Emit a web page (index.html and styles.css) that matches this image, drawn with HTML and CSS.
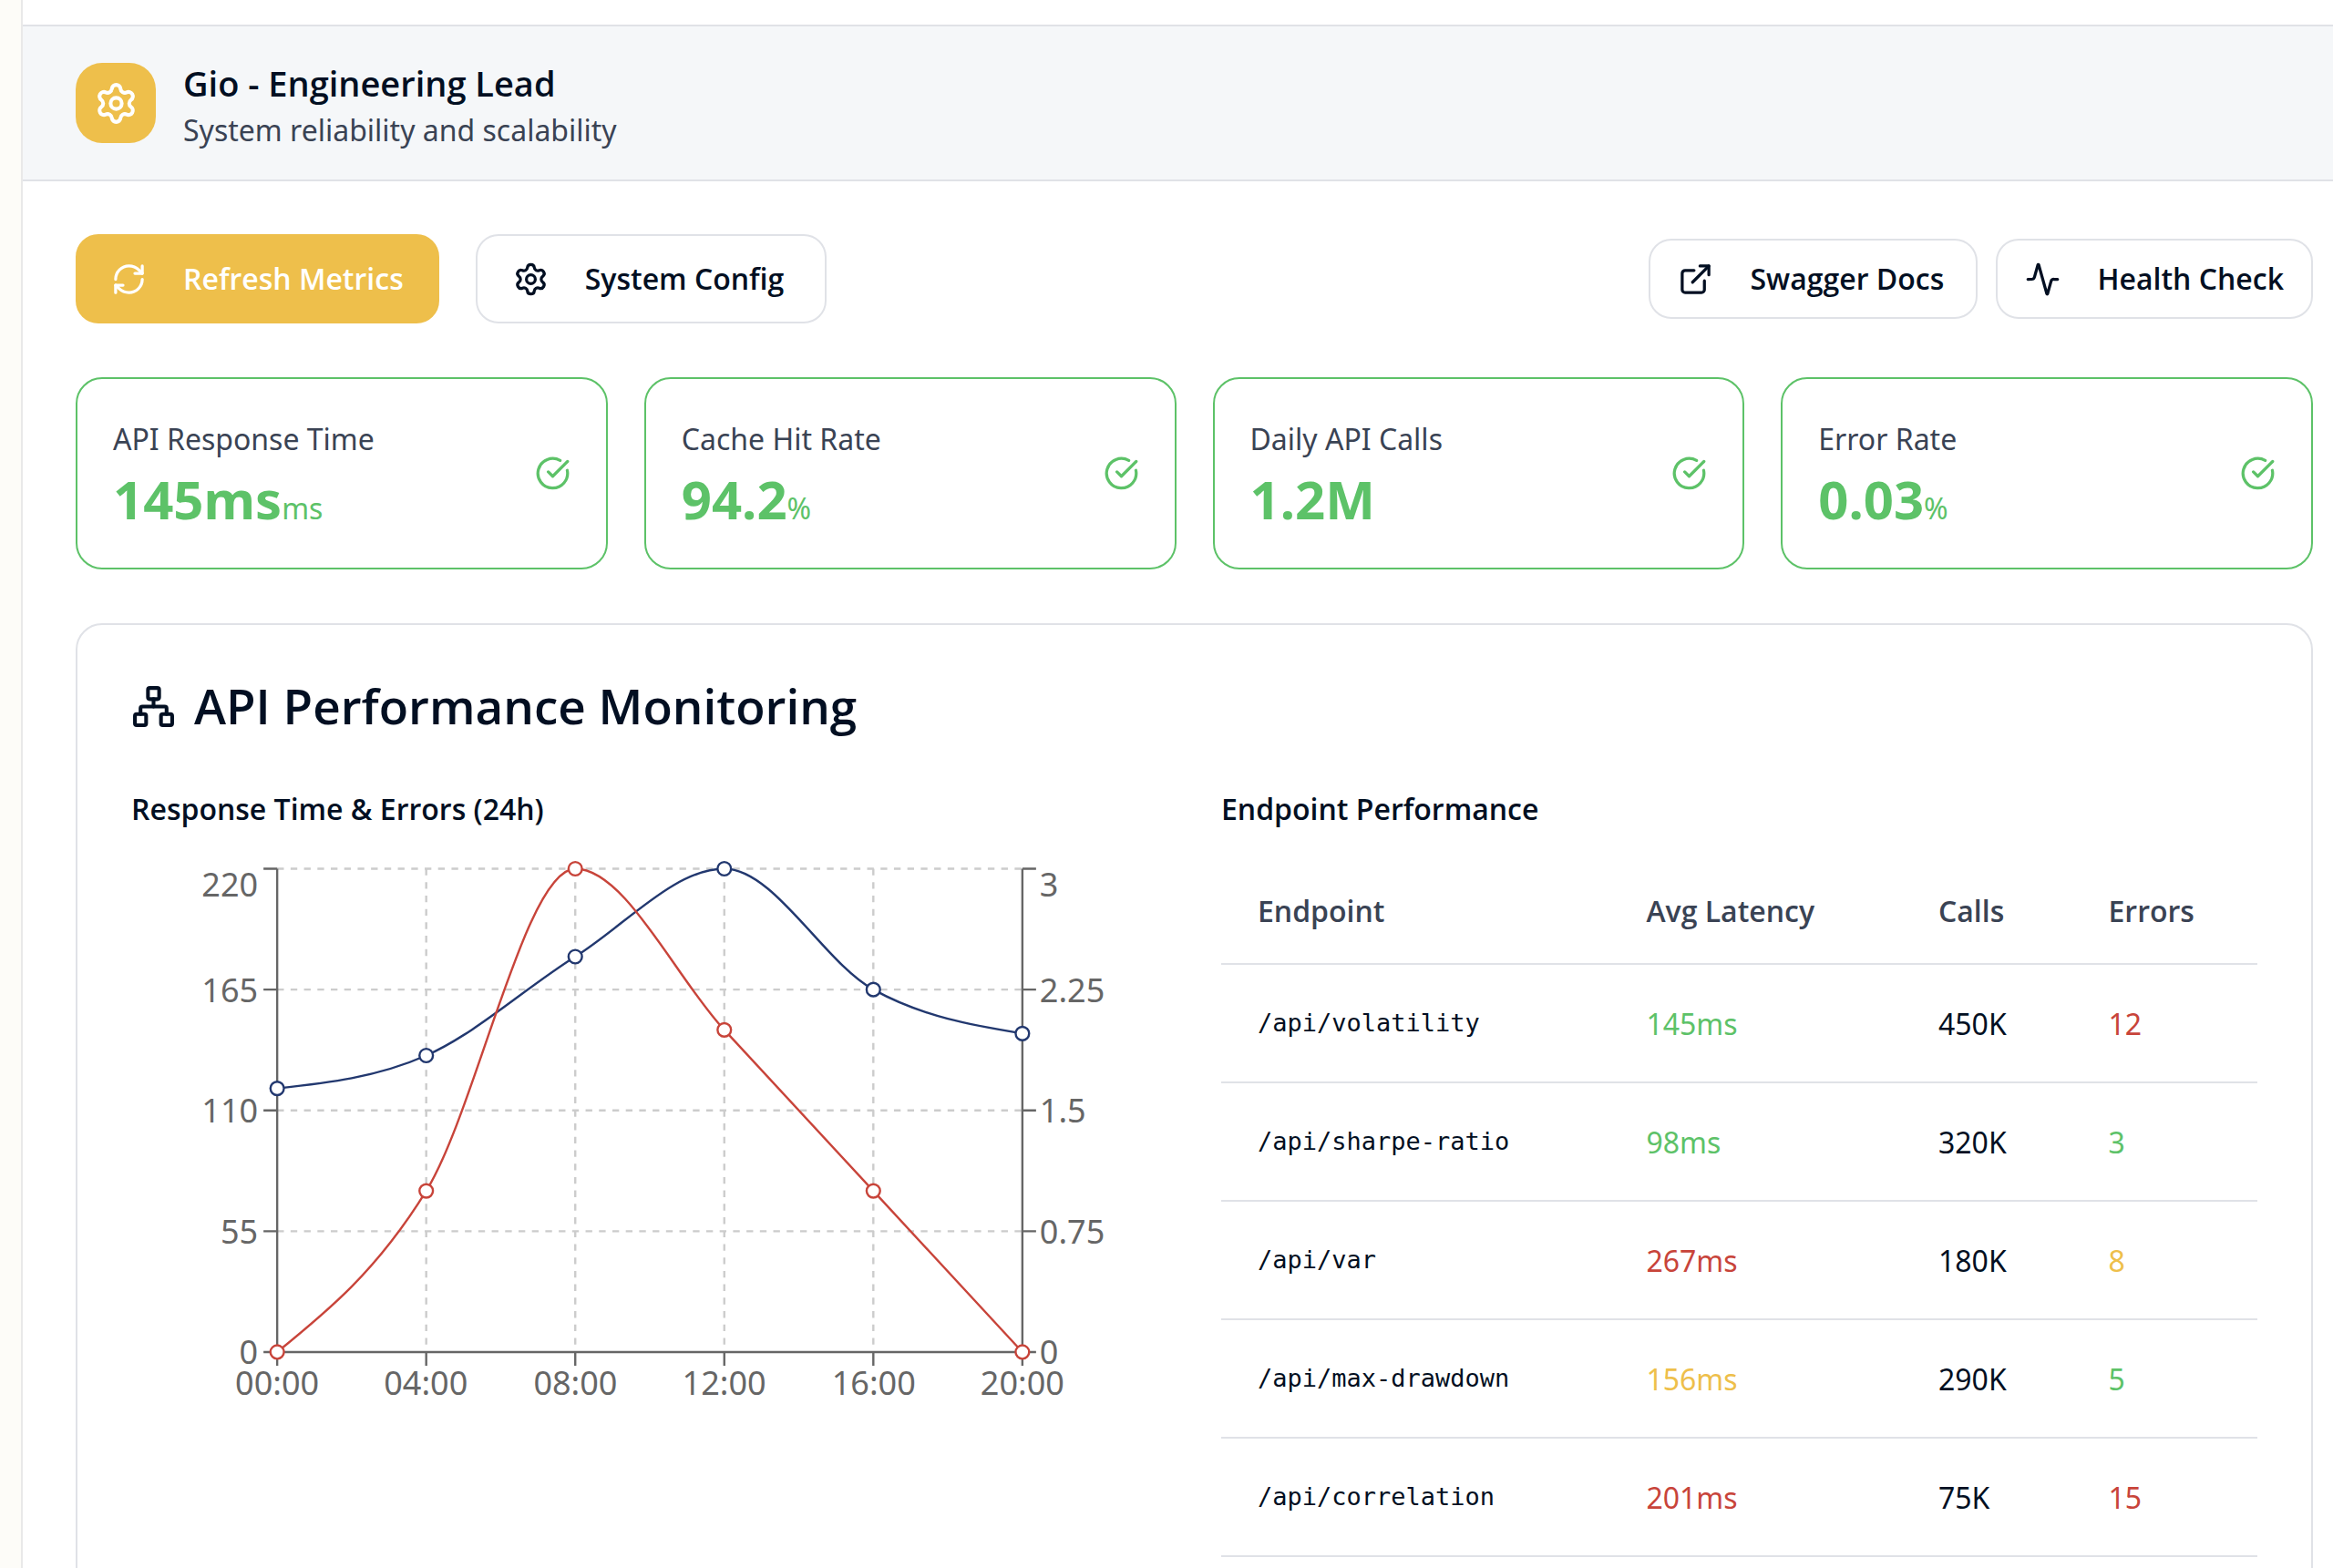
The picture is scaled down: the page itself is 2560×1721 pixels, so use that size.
FILE: index.html
```html
<!DOCTYPE html>
<html lang="en">
<head>
<meta charset="utf-8">
<title>Gio - Engineering Lead</title>
<link rel="stylesheet" href="styles.css">
</head>
<body>
<svg class="sprite" aria-hidden="true">
  <symbol id="settings" viewBox="0 0 24 24"><path d="M9.671 4.136a2.34 2.34 0 0 1 4.659 0 2.34 2.34 0 0 0 3.319 1.915 2.34 2.34 0 0 1 2.33 4.033 2.34 2.34 0 0 0 0 3.831 2.34 2.34 0 0 1-2.33 4.033 2.34 2.34 0 0 0-3.319 1.915 2.34 2.34 0 0 1-4.659 0 2.34 2.34 0 0 0-3.32-1.915 2.34 2.34 0 0 1-2.33-4.033 2.34 2.34 0 0 0 0-3.831A2.34 2.34 0 0 1 6.35 6.051a2.34 2.34 0 0 0 3.319-1.915"/><circle cx="12" cy="12" r="3"/></symbol>
  <symbol id="refresh" viewBox="0 0 24 24"><path d="M3 12a9 9 0 0 1 9-9 9.75 9.75 0 0 1 6.74 2.74L21 8"/><path d="M21 3v5h-5"/><path d="M21 12a9 9 0 0 1-9 9 9.75 9.75 0 0 1-6.74-2.74L3 16"/><path d="M8 16H3v5"/></symbol>
  <symbol id="external" viewBox="0 0 24 24"><path d="M15 3h6v6"/><path d="M10 14 21 3"/><path d="M18 13v6a2 2 0 0 1-2 2H5a2 2 0 0 1-2-2V8a2 2 0 0 1 2-2h6"/></symbol>
  <symbol id="activity" viewBox="0 0 24 24"><path d="M22 12h-2.48a2 2 0 0 0-1.93 1.46l-2.35 8.36a.25.25 0 0 1-.48 0L9.24 2.18a.25.25 0 0 0-.48 0l-2.35 8.36A2 2 0 0 1 4.49 12H2"/></symbol>
  <symbol id="check" viewBox="0 0 24 24"><path d="M21.801 10A10 10 0 1 1 17 3.335"/><path d="m9 11 3 3L22 4"/></symbol>
  <symbol id="network" viewBox="0 0 24 24"><rect x="16" y="16" width="6" height="6" rx="1"/><rect x="2" y="16" width="6" height="6" rx="1"/><rect x="9" y="2" width="6" height="6" rx="1"/><path d="M5 16v-3a1 1 0 0 1 1-1h12a1 1 0 0 1 1 1v3"/><path d="M12 12V8"/></symbol>
</svg>
<div class="shell">
  <aside class="rail"></aside>
  <div class="page">
    <header class="persona">
      <span class="persona-badge"><svg class="icon icon-lg"><use href="#settings"/></svg></span>
      <div class="persona-text">
        <h1 class="persona-name">Gio - Engineering Lead</h1>
        <p class="persona-role">System reliability and scalability</p>
      </div>
    </header>
    <main class="content">
      <div class="toolbar">
        <div class="group">
          <button class="btn btn-primary" type="button"><svg class="icon"><use href="#refresh"/></svg>Refresh Metrics</button>
          <button class="btn btn-config" type="button"><svg class="icon"><use href="#settings"/></svg>System Config</button>
        </div>
        <div class="group group-tight">
          <button class="btn btn-sm btn-docs" type="button"><svg class="icon"><use href="#external"/></svg>Swagger Docs</button>
          <button class="btn btn-sm" type="button"><svg class="icon"><use href="#activity"/></svg>Health Check</button>
        </div>
      </div>
      <section class="stats">
        <article class="stat"><div class="stat-text"><p class="stat-label">API Response Time</p><p class="stat-value">145ms<span class="unit">ms</span></p></div><svg class="icon"><use href="#check"/></svg></article>
        <article class="stat"><div class="stat-text"><p class="stat-label">Cache Hit Rate</p><p class="stat-value">94.2<span class="unit">%</span></p></div><svg class="icon"><use href="#check"/></svg></article>
        <article class="stat"><div class="stat-text"><p class="stat-label">Daily API Calls</p><p class="stat-value">1.2M</p></div><svg class="icon"><use href="#check"/></svg></article>
        <article class="stat"><div class="stat-text"><p class="stat-label">Error Rate</p><p class="stat-value">0.03<span class="unit">%</span></p></div><svg class="icon"><use href="#check"/></svg></article>
      </section>
      <section class="panel">
        <h2 class="panel-title"><svg class="icon icon-lg"><use href="#network"/></svg>API Performance Monitoring</h2>
        <div class="columns">
          <div>
            <h3 class="subtitle">Response Time &amp; Errors (24h)</h3>
            <svg class="chart" viewBox="-1 -0.5 1136 628" role="img" aria-label="Response time and errors over 24 hours">
              <path class="grid" d="M159 12H976M159 144.5H976M159 277H976M159 409.5H976M322.4 12V542M485.8 12V542M649.2 12V542M812.6 12V542"/>
              <path class="axis" d="M159 12V542H976V12M144 12H159M144 144.5H159M144 277H159M144 409.5H159M144 542H159M976 12H991M976 144.5H991M976 277H991M976 409.5H991M976 542H991M159 542V557M322.4 542V557M485.8 542V557M649.2 542V557M812.6 542V557M976 542V557"/>
              <g class="tick end"><text x="138" y="42">220</text><text x="138" y="158">165</text><text x="138" y="290">110</text><text x="138" y="423">55</text><text x="138" y="555">0</text></g>
              <g class="tick"><text x="995" y="42">3</text><text x="995" y="158">2.25</text><text x="995" y="290">1.5</text><text x="995" y="423">0.75</text><text x="995" y="555">0</text></g>
              <g class="tick middle"><text x="159" y="589">00:00</text><text x="322" y="589">04:00</text><text x="486" y="589">08:00</text><text x="649" y="589">12:00</text><text x="813" y="589">16:00</text><text x="976" y="589">20:00</text></g>
              <g class="series latency">
                <path d="M159 252.9C213.5 246.9 267.9 240.9 322.4 216.8C376.9 192.7 431.3 142.5 485.8 108.4C540.3 74.3 594.7 12 649.2 12C703.7 12 758.1 114.4 812.6 144.5C867.1 174.6 921.5 183.7 976 192.7"/>
                <circle cx="159" cy="252.9" r="7.4"/><circle cx="322.4" cy="216.8" r="7.4"/><circle cx="485.8" cy="108.4" r="7.4"/><circle cx="649.2" cy="12" r="7.4"/><circle cx="812.6" cy="144.5" r="7.4"/><circle cx="976" cy="192.7" r="7.4"/>
              </g>
              <g class="series errors">
                <path d="M159 542C213.5 497.8 267.9 453.6 322.4 365.3C376.9 277 431.3 12 485.8 12C540.3 12 594.7 129.8 649.2 188.7L812.6 365.3L976 542"/>
                <circle cx="159" cy="542" r="7.4"/><circle cx="322.4" cy="365.3" r="7.4"/><circle cx="485.8" cy="12" r="7.4"/><circle cx="649.2" cy="188.7" r="7.4"/><circle cx="812.6" cy="365.3" r="7.4"/><circle cx="976" cy="542" r="7.4"/>
              </g>
            </svg>
          </div>
          <div>
            <h3 class="subtitle">Endpoint Performance</h3>
            <table class="endpoints">
              <thead><tr><th class="c-endpoint">Endpoint</th><th class="c-latency">Avg Latency</th><th class="c-calls">Calls</th><th>Errors</th></tr></thead>
              <tbody>
                <tr><td class="mono">/api/volatility</td><td class="good">145ms</td><td>450K</td><td class="bad">12</td></tr>
                <tr><td class="mono">/api/sharpe-ratio</td><td class="good">98ms</td><td>320K</td><td class="good">3</td></tr>
                <tr><td class="mono">/api/var</td><td class="bad">267ms</td><td>180K</td><td class="warn">8</td></tr>
                <tr><td class="mono">/api/max-drawdown</td><td class="warn">156ms</td><td>290K</td><td class="good">5</td></tr>
                <tr><td class="mono">/api/correlation</td><td class="bad">201ms</td><td>75K</td><td class="bad">15</td></tr>
              </tbody>
            </table>
          </div>
        </div>
      </section>
    </main>
  </div>
</div>
</body>
</html>
```
FILE: styles.css
```css
:root {
  --ink: #020f22;
  --muted: #3a4354;
  --line: #e0e2e7;
  --gold: #eebf4b;
  --green: #5dc268;
  --red: #c8443a;
  --blue: #22386f;
}

* { box-sizing: border-box; }

body {
  margin: 0;
  background: #fff;
  color: var(--ink);
  font: 400 32px/48px "Noto Sans", "Open Sans", sans-serif;
}

h1, h2, h3, p { margin: 0; }

.sprite { display: none; }

.icon {
  flex: none;
  width: 39px;
  height: 39px;
  fill: none;
  stroke: currentColor;
  stroke-width: 2;
  stroke-linecap: round;
  stroke-linejoin: round;
}

.icon-lg { width: 49px; height: 49px; }

.shell { display: flex; min-height: 100vh; }

.rail {
  flex: none;
  width: 25px;
  background: #fdfcf8;
  border-right: 2px solid #e9e9e9;
}

.page { flex: 1; min-width: 0; padding-top: 27px; }

.persona {
  display: flex;
  align-items: center;
  gap: 30px;
  height: 172px;
  padding: 0 58px;
  background: #f5f7f9;
  border-top: 2px solid var(--line);
  border-bottom: 2px solid var(--line);
}

.persona-badge {
  display: grid;
  place-items: center;
  width: 88px;
  height: 88px;
  border-radius: 29px;
  background: var(--gold);
  color: #fff;
}

.persona-text { padding-top: 4px; }
.persona-name { font: 600 38px/56px "Open Sans", sans-serif; }
.persona-role { color: var(--muted); }

.content { padding: 58px 22px 0 58px; }

.toolbar, .group { display: flex; align-items: center; }
.toolbar { justify-content: space-between; }
.group { gap: 40px; }
.group-tight { gap: 20px; }

.btn {
  display: flex;
  align-items: center;
  gap: 40px;
  height: 98px;
  padding: 0 39px;
  border: 2px solid var(--line);
  border-radius: 25px;
  background: #fff;
  color: var(--ink);
  font: 600 32px/48px "Open Sans", sans-serif;
}

.btn-primary { padding: 0 37px; background: var(--gold); border-color: var(--gold); color: #fff; }
.btn-config { min-width: 385px; }
.btn-sm { height: 88px; padding: 0 30px; }
.btn-docs { min-width: 361px; }

.stats {
  display: grid;
  grid-template-columns: repeat(4, 1fr);
  gap: 40px;
  margin-top: 59px;
}

.stat {
  display: flex;
  align-items: center;
  justify-content: space-between;
  height: 211px;
  padding: 0 39px;
  border: 2px solid var(--green);
  border-radius: 29px;
  color: var(--green);
}

.stat-text { padding-top: 6px; }
.stat-label { color: var(--muted); }
.stat-value { margin-top: 2px; font-weight: 700; font-size: 58px; line-height: 80px; }
.unit { font-weight: 400; font-size: 32px; line-height: 32px; }

.panel {
  margin-top: 59px;
  padding: 59px;
  border: 2px solid var(--line);
  border-radius: 29px;
}

.panel-title {
  display: flex;
  align-items: center;
  gap: 20px;
  font: 600 53px/60px "Open Sans", sans-serif;
}

.columns {
  display: grid;
  grid-template-columns: 1fr 1fr;
  gap: 59px;
  margin-top: 59px;
}

.subtitle { font: 600 32px/48px "Open Sans", sans-serif; margin-bottom: 29px; }

.chart { display: block; width: 100%; height: auto; }
.grid { fill: none; stroke: #ccc; stroke-width: 2.4; stroke-dasharray: 7.35 7.35; }
.axis { fill: none; stroke: #666; stroke-width: 2.4; }
.tick { fill: #666; font-size: 36px; }
.end { text-anchor: end; }
.middle { text-anchor: middle; }
.series { fill: none; stroke-width: 2.4; }
.series circle { fill: #fff; }
.latency { stroke: var(--blue); }
.errors { stroke: var(--red); }

.endpoints {
  width: 100%;
  border-collapse: collapse;
  table-layout: fixed;
  text-align: left;
}

.endpoints th, .endpoints td { padding: 2px 40px 0; border-bottom: 2px solid var(--line); }
.endpoints th { height: 117px; color: var(--muted); font: 600 32px/48px "Open Sans", sans-serif; }
.endpoints td { height: 130px; }
.endpoints .mono { padding-top: 0; font-family: "DejaVu Sans Mono", monospace; font-size: 27px; white-space: nowrap; }
.endpoints .c-endpoint { width: 37.5%; }
.endpoints .c-latency { width: 28.2%; }
.endpoints .c-calls { width: 16.4%; }

.good { color: var(--green); }
.warn { color: var(--gold); }
.bad { color: var(--red); }
```
